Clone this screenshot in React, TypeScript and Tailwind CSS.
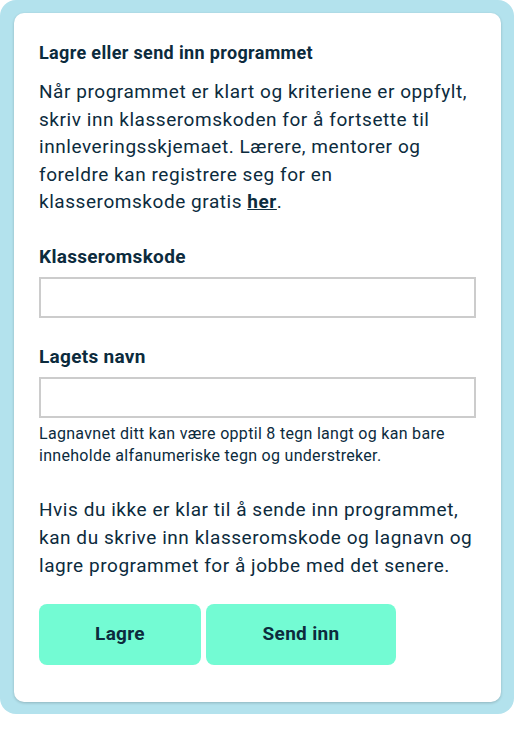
import React, { useState } from "react";

export default function App() {
    const [code, setCode] = useState("");
    const [team, setTeam] = useState("");

    return (
        <div className="w-[514px] h-[730px] bg-white" style={{ fontFamily: "Roboto, 'Liberation Sans', sans-serif" }}>
            <div className="w-[514px] rounded-[16px] bg-[#b3e2ed] pt-[13px] pb-[12px] pl-[14px] pr-[13px]">
                <div className="rounded-[10px] bg-white px-[25px] pt-[29px] pb-[37px] text-[#0c2b3d] shadow-[0_1px_3px_rgba(0,0,0,0.2)]">
                    <h2 className="text-[18px] font-bold leading-[22px] tracking-[0.35px]">Lagre eller send inn programmet</h2>

                    <p className="mt-[14px] text-[19px] leading-[27.5px] tracking-[0.55px]">
                        Når programmet er klart og kriteriene er oppfylt, skriv inn klasseromskoden for å fortsette til innleveringsskjemaet. Lærere, mentorer og foreldre kan registrere seg for en klasseromskode gratis{" "}
                        <a href="#" className="font-bold underline">her</a>.
                    </p>

                    <label className="mt-[28px] block text-[19px] font-bold leading-[26px] tracking-[0.3px]" htmlFor="code">Klasseromskode</label>
                    <input
                        id="code"
                        type="text"
                        value={code}
                        onChange={(e) => setCode(e.target.value)}
                        className="mt-[7px] block h-[41px] w-[437px] border-2 border-[#cccccc] px-2 text-[16px] outline-none"
                    />

                    <label className="mt-[26px] block text-[19px] font-bold leading-[26px] tracking-[0.3px]" htmlFor="team">Lagets navn</label>
                    <input
                        id="team"
                        type="text"
                        value={team}
                        onChange={(e) => setTeam(e.target.value)}
                        className="mt-[7px] block h-[41px] w-[437px] border-2 border-[#cccccc] px-2 text-[16px] outline-none"
                    />

                    <p className="mt-[5px] text-[16px] leading-[22.7px] tracking-[0.3px]">
                        Lagnavnet ditt kan være opptil 8 tegn langt og kan bare inneholde alfanumeriske tegn og understreker.
                    </p>

                    <p className="mt-[28px] text-[19px] leading-[28px] tracking-[0.55px]">
                        Hvis du ikke er klar til å sende inn programmet, kan du skrive inn klasseromskode og lagnavn og lagre programmet for å jobbe med det senere.
                    </p>

                    <div className="mt-[24px] flex gap-[5px]">
                        <button className="h-[61px] w-[162px] rounded-[8px] bg-[#73fbd3] text-[19px] font-bold tracking-[0.3px] text-[#0c2b3d]">Lagre</button>
                        <button className="h-[61px] w-[190px] rounded-[8px] bg-[#73fbd3] text-[19px] font-bold tracking-[0.3px] text-[#0c2b3d]">Send inn</button>
                    </div>
                </div>
            </div>
        </div>
    );
}
